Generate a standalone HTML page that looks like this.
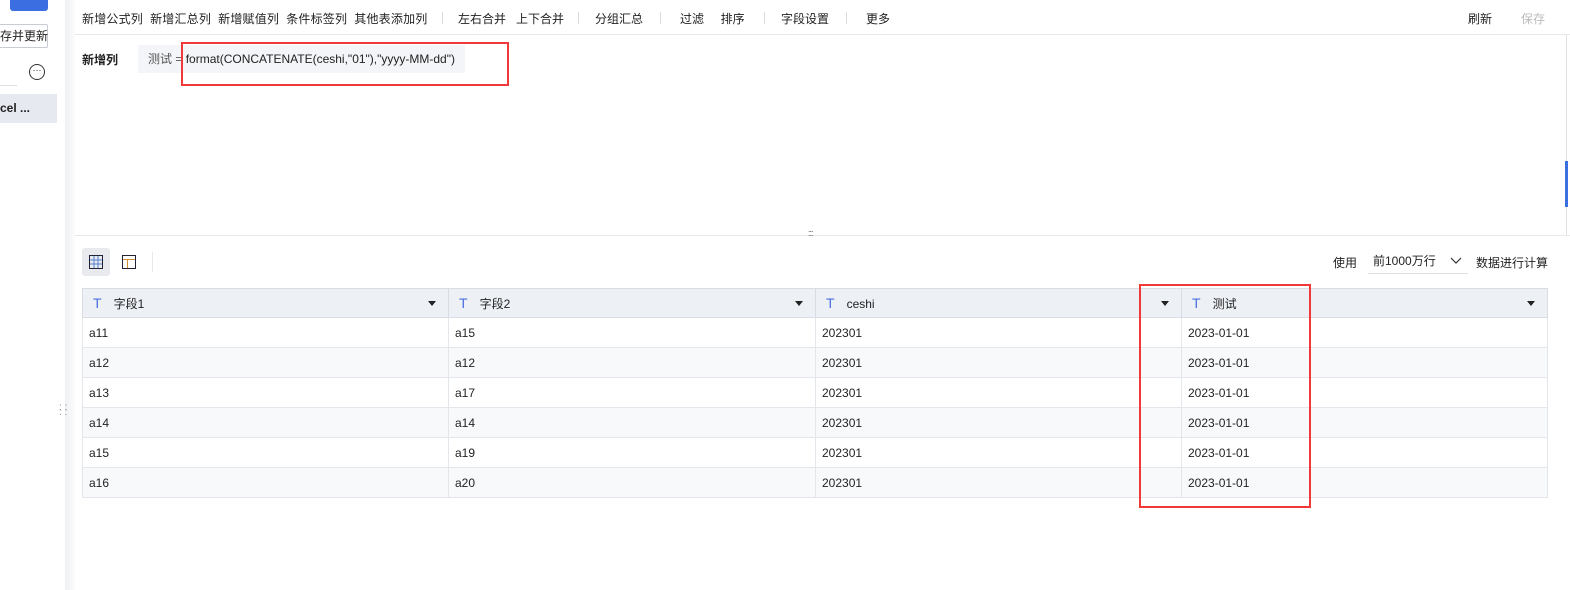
<!DOCTYPE html>
<html><head><meta charset="utf-8"><style>
*{margin:0;padding:0;box-sizing:border-box}
body{width:1570px;height:590px;overflow:hidden;background:#fff;font-family:"Liberation Sans","Noto Sans CJK SC",sans-serif;font-size:12px;color:#222;position:relative}
.a{position:absolute;white-space:nowrap}
.sep{position:absolute;width:1px;height:12px;background:#d8dbe0;top:12px}
table{position:absolute;left:82px;top:288px;border-collapse:collapse;width:1466px}
td{height:30px;border:1px solid #e3e6eb;padding-left:6px;font-size:12px}
tr.h td{background:#edf0f5;border-color:#d9dde3;height:29px;position:relative}
tr:nth-child(odd):not(.h) td{background:#f8f9fb}
.t{color:#4a6ee0;font-size:14px;margin:0 12px 0 4px}
.dd{position:absolute;right:12px;top:12px;border-left:4px solid transparent;border-right:4px solid transparent;border-top:5px solid #222}
</style></head><body>
<div class="a" style="left:10px;top:0;width:38px;height:11px;background:#3b6ee0;border-radius:0 0 3px 3px"></div>
<div class="a" style="left:-2px;top:24px;width:50px;height:24px;border:1px solid #c8ccd3;border-radius:2px;font-size:12px;line-height:22px;padding-left:1px">存并更新</div>
<div class="a" style="left:29px;top:64px;width:16px;height:16px;border:1px solid #333;border-radius:50%;font-size:9px;line-height:10px;text-align:center">···</div>
<div class="a" style="left:0;top:85px;width:17px;height:1px;background:#dcdfe4"></div>
<div class="a" style="left:0;top:94px;width:57px;height:29px;background:#e6e9f0;font-weight:bold;line-height:29px">cel ...</div>
<div class="a" style="left:65px;top:0;width:10px;height:590px;background:linear-gradient(to right,#eef0f3,#fcfcfd)"></div>
<div class="a" style="left:59px;top:405px;color:#888;font-size:10px;line-height:5px">: :<br>: :</div>
<div class="a" style="left:82px;top:10px;letter-spacing:0.2px">新增公式列&nbsp;&nbsp;新增汇总列&nbsp;&nbsp;新增赋值列&nbsp;&nbsp;条件标签列&nbsp;&nbsp;其他表添加列</div>
<div class="sep" style="left:442px"></div>
<div class="a" style="left:458px;top:10px">左右合并&nbsp;&nbsp;&nbsp;上下合并</div>
<div class="sep" style="left:578px"></div>
<div class="a" style="left:595px;top:10px">分组汇总</div>
<div class="sep" style="left:660px"></div>
<div class="a" style="left:680px;top:10px">过滤&nbsp;&nbsp;&nbsp;&nbsp;&nbsp;排序</div>
<div class="sep" style="left:764px"></div>
<div class="a" style="left:781px;top:10px">字段设置</div>
<div class="sep" style="left:846px"></div>
<div class="a" style="left:866px;top:10px">更多</div>
<div class="a" style="left:1468px;top:10px">刷新</div>
<div class="a" style="left:1521px;top:10px;color:#bbb">保存</div>
<div class="a" style="left:75px;top:34px;width:1495px;height:1px;background:#e6e8ec"></div>
<div class="a" style="left:1566px;top:35px;width:1px;height:200px;background:#e0e2e6"></div>
<div class="a" style="left:1565px;top:161px;width:3px;height:46px;background:#3b6ee0"></div>
<div class="a" style="left:82px;top:51px;font-weight:bold">新增列</div>
<div class="a" style="left:138px;top:45px;width:327px;height:28px;background:#f3f5f8;line-height:28px;padding-left:10px;color:#555">测试 = <span style="color:#222">format(CONCATENATE(ceshi,"01"),"yyyy-MM-dd")</span></div>
<div class="a" style="left:181px;top:42px;width:328px;height:44px;border:2px solid #f03a3a"></div>
<div class="a" style="left:75px;top:235px;width:1495px;height:1px;background:#e6e8ec"></div>
<div class="a" style="left:808px;top:228px;font-size:9px;color:#666;letter-spacing:-1px">:::</div>
<div class="a" style="left:82px;top:248px;width:28px;height:28px;background:#e8eaee;border-radius:3px"></div>
<svg class="a" style="left:89px;top:255px" width="14" height="14" viewBox="0 0 14 14"><rect x=".5" y=".5" width="13" height="13" fill="none" stroke="#223"/><path d="M5 1v12M9 1v12M1 5h12M1 9h12" stroke="#5580d0"/></svg>
<svg class="a" style="left:122px;top:255px" width="14" height="14" viewBox="0 0 14 14"><rect x=".5" y=".5" width="13" height="13" fill="none" stroke="#223"/><path d="M1 4.5h12M5.5 5v8" stroke="#d49030"/></svg>
<div class="a" style="left:152px;top:252px;width:1px;height:20px;background:#e6e8ec"></div>
<div class="a" style="left:1333px;top:254px">使用</div>
<div class="a" style="left:1368px;top:248px;width:100px;height:26px;border-bottom:1px solid #dcdfe4;line-height:26px;padding-left:5px">前1000万行</div>
<svg class="a" style="left:1450px;top:257px" width="12" height="8" viewBox="0 0 12 8"><path d="M1 1l5 5 5-5" fill="none" stroke="#333" stroke-width="1.2"/></svg>
<div class="a" style="left:1476px;top:254px">数据进行计算</div>
<table>
<tr class="h"><td style="width:366px"><span class="t">T</span>字段1<i class="dd"></i></td><td style="width:367px"><span class="t">T</span>字段2<i class="dd"></i></td><td style="width:366px"><span class="t">T</span>ceshi<i class="dd"></i></td><td><span class="t">T</span>测试<i class="dd"></i></td></tr>
<tr><td>a11</td><td>a15</td><td>202301</td><td>2023-01-01</td></tr>
<tr><td>a12</td><td>a12</td><td>202301</td><td>2023-01-01</td></tr>
<tr><td>a13</td><td>a17</td><td>202301</td><td>2023-01-01</td></tr>
<tr><td>a14</td><td>a14</td><td>202301</td><td>2023-01-01</td></tr>
<tr><td>a15</td><td>a19</td><td>202301</td><td>2023-01-01</td></tr>
<tr><td>a16</td><td>a20</td><td>202301</td><td>2023-01-01</td></tr>
</table>
<div class="a" style="left:1139px;top:284px;width:172px;height:224px;border:2px solid #f03a3a"></div>
</body></html>
